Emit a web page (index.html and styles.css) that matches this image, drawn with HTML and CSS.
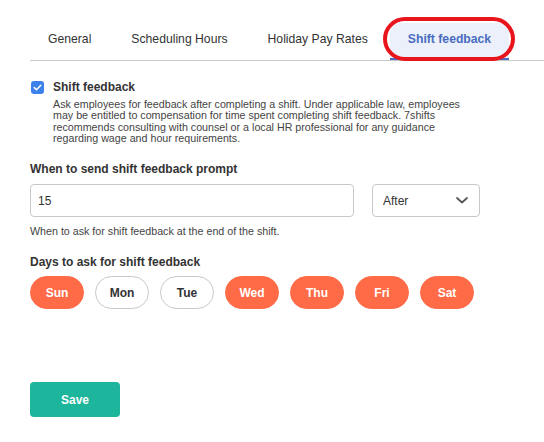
FILE: index.html
```html
<!DOCTYPE html>
<html lang="en">
<head>
<meta charset="utf-8">
<title>Shift feedback settings</title>
<link rel="stylesheet" href="styles.css">
</head>
<body>
<div class="page">
  <nav class="tabs">
    <div class="tab">General</div>
    <div class="tab">Scheduling Hours</div>
    <div class="tab">Holiday Pay Rates</div>
    <div class="tab active">Shift feedback<span class="highlight"></span></div>
  </nav>

  <section class="check-block">
    <label class="check-row">
      <span class="checkbox">
        <svg width="13" height="13" viewBox="0 0 13 13"><path d="M3.3 6.6 L5.5 8.8 L9.8 4.3" fill="none" stroke="#fff" stroke-width="1.5" stroke-linecap="round" stroke-linejoin="round"/></svg>
      </span>
      <span class="check-label">Shift feedback</span>
    </label>
    <p class="desc">Ask employees for feedback after completing a shift. Under applicable law, employees may be entitled to compensation for time spent completing shift feedback. 7shifts recommends consulting with counsel or a local HR professional for any guidance regarding wage and hour requirements.</p>
  </section>

  <section class="field">
    <div class="field-label">When to send shift feedback prompt</div>
    <div class="field-row">
      <div class="input">15</div>
      <div class="select">
        <span>After</span>
        <svg width="12" height="7" viewBox="0 0 12 7"><path d="M1 1 L6 5.5 L11 1" fill="none" stroke="#555" stroke-width="1.8" stroke-linecap="round" stroke-linejoin="round"/></svg>
      </div>
    </div>
    <div class="help">When to ask for shift feedback at the end of the shift.</div>
  </section>

  <section class="field days-field">
    <div class="field-label">Days to ask for shift feedback</div>
    <div class="days">
      <span class="day on">Sun</span>
      <span class="day">Mon</span>
      <span class="day">Tue</span>
      <span class="day on">Wed</span>
      <span class="day on">Thu</span>
      <span class="day on">Fri</span>
      <span class="day on">Sat</span>
    </div>
  </section>

  <button class="save">Save</button>
</div>
</body>
</html>
```

FILE: styles.css
```css
html, body {
  margin: 0;
  padding: 0;
  background: #fff;
}

body {
  font-family: "Liberation Sans", Arial, sans-serif;
  color: #333;
}

.page {
  padding: 23px 0 0 30px;
}

.tabs {
  display: flex;
  border-bottom: 1px solid #c9c9c9;
  height: 37px;
}

.tab {
  position: relative;
  height: 37px;
  box-sizing: border-box;
  padding: 9px 20px 0;
  font-size: 12.2px;
  line-height: 15px;
  color: #333;
  white-space: nowrap;
}

.tab:first-child {
  padding-left: 18px;
}

.tab.active {
  margin-left: 2px;
  padding: 9px 18px 0;
  background: #ebf0fb;
  color: #4a6cbe;
  font-weight: bold;
  border-radius: 10px 10px 0 0;
  border-bottom: 2px solid #4a6cc4;
}

.highlight {
  position: absolute;
  left: -7px;
  right: -6px;
  top: -6px;
  bottom: -3px;
  border: 4px solid #e8151c;
  border-radius: 22px;
  pointer-events: none;
}

.check-block {
  margin-top: 19px;
}

.check-row {
  display: flex;
  align-items: center;
  gap: 9px;
  padding-left: 1px;
}

.checkbox {
  width: 13px;
  height: 13px;
  border-radius: 3px;
  background: #3c82ea;
  display: flex;
}

.check-label {
  font-size: 12px;
  font-weight: bold;
  color: #333;
}

.desc {
  margin: 5px 0 0 23px;
  width: 412px;
  font-size: 10.7px;
  line-height: 11.3px;
  color: #444;
}

.field {
  margin-top: 18px;
}

.field-label {
  font-size: 12px;
  font-weight: bold;
  color: #333;
  line-height: 14px;
}

.field-row {
  display: flex;
  gap: 18px;
  margin-top: 8px;
}

.input {
  width: 324px;
  height: 33px;
  box-sizing: border-box;
  border: 1px solid #c8c8c8;
  border-radius: 4px;
  padding: 0 7px;
  display: flex;
  align-items: center;
  font-size: 12px;
}

.select {
  width: 108px;
  height: 33px;
  box-sizing: border-box;
  border: 1px solid #c8c8c8;
  border-radius: 4px;
  padding: 0 11px 0 10px;
  display: flex;
  align-items: center;
  justify-content: space-between;
  font-size: 12px;
}

.help {
  margin-top: 9px;
  font-size: 10.7px;
  line-height: 11px;
  color: #444;
}

.days-field {
  margin-top: 18px;
}

.days {
  display: flex;
  gap: 11px;
  margin-top: 7px;
}

.day {
  width: 54px;
  height: 33px;
  box-sizing: border-box;
  border-radius: 17px;
  border: 1px solid #c8c8c8;
  background: #fff;
  color: #333;
  font-size: 12px;
  font-weight: bold;
  display: flex;
  align-items: center;
  justify-content: center;
}

.day.on {
  background: #ff6a47;
  border-color: #ff6a47;
  color: #fff;
}

.save {
  display: block;
  margin-top: 73px;
  width: 90px;
  height: 35px;
  border: none;
  border-radius: 4px;
  background: #1db59c;
  color: #fff;
  font-family: inherit;
  font-size: 12px;
  font-weight: bold;
  cursor: pointer;
}
```
